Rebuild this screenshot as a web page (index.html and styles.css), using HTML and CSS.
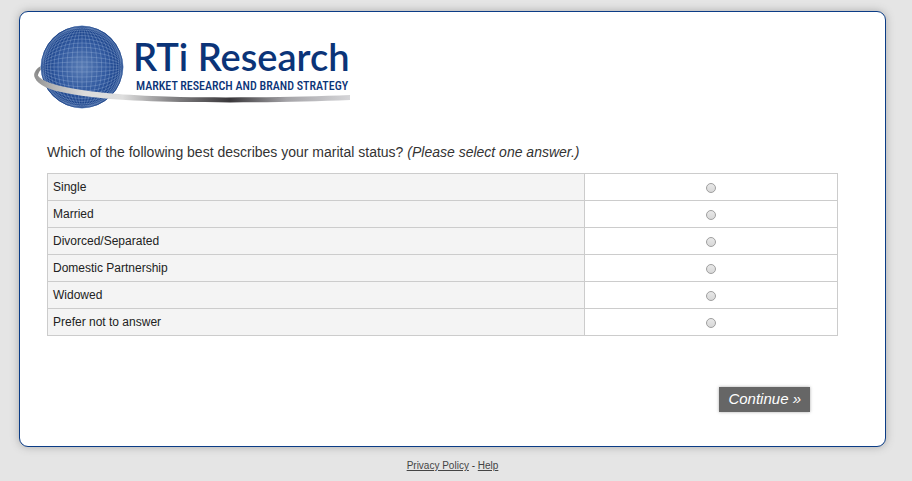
FILE: index.html
```
<!DOCTYPE html>
<html lang="en">
<head>
    <meta charset="utf-8" />
    <meta name="viewport" content="width=device-width, initial-scale=1.0">
    <title>RTi Research Survey</title>
    <link rel="stylesheet" href="styles.css">
</head>
<body>
    <div class="survey">
        <div class="logo">
            <svg viewBox="0 0 320 92" width="320" height="92" role="img" aria-label="RTi Research">
                <defs>
                    <radialGradient id="ball" cx="50%" cy="50%" r="50%">
                        <stop offset="0" stop-color="#5a7db5" />
                        <stop offset="0.6" stop-color="#31599f" />
                        <stop offset="1" stop-color="#123a82" />
                    </radialGradient>
                    <linearGradient id="band" gradientUnits="userSpaceOnUse" x1="4" y1="0" x2="320" y2="0">
                        <stop offset="0" stop-color="#8f8f8f" />
                        <stop offset="0.06" stop-color="#b4b4b4" />
                        <stop offset="0.16" stop-color="#dcdcdc" />
                        <stop offset="0.28" stop-color="#dedede" />
                        <stop offset="0.42" stop-color="#8d8c8e" />
                        <stop offset="0.62" stop-color="#39373a" />
                        <stop offset="0.8" stop-color="#a5a4a8" />
                        <stop offset="1" stop-color="#d5d5d8" />
                    </linearGradient>
                    <g id="meridians">
                        <path d="M52-41V41" transform="translate(0 47)" />
                        <ellipse cx="52" cy="47" rx="5" ry="41" />
                        <ellipse cx="52" cy="47" rx="10" ry="41" />
                        <ellipse cx="52" cy="47" rx="15" ry="41" />
                        <ellipse cx="52" cy="47" rx="19.7" ry="41" />
                        <ellipse cx="52" cy="47" rx="24" ry="41" />
                        <ellipse cx="52" cy="47" rx="28" ry="41" />
                        <ellipse cx="52" cy="47" rx="31.5" ry="41" />
                        <ellipse cx="52" cy="47" rx="34.5" ry="41" />
                        <ellipse cx="52" cy="47" rx="37" ry="41" />
                        <ellipse cx="52" cy="47" rx="39" ry="41" />
                    </g>
                </defs>
                <!-- back of the ring -->
                <path d="M13 45C6 48 3 53 5 58L8 60C7 55 9 51 12 49Z" fill="#8a8a8a" />
                <circle cx="52" cy="47" r="41" fill="url(#ball)" />
                <g fill="none" stroke="#a9bfe0" stroke-opacity="0.5" stroke-width="0.6">
                    <use href="#meridians" />
                    <use href="#meridians" transform="rotate(90 52 47)" />
                </g>
                <circle cx="52" cy="47" r="40.6" fill="none" stroke="#1b4389" stroke-width="0.8" />
                <!-- front of the ring -->
                <path d="M5 52C2 61 13 68 31 72C58 78 96 81 150 82C215 83 270 82 320 80V75C270 77 205 78 150 77C115 76 70 74 40 68C20 64 8 60 6 52Z" fill="url(#band)" />
                <text class="logo-name" x="103" y="51">RTi Research</text>
                <text class="logo-tagline" x="106" y="70">MARKET RESEARCH AND BRAND STRATEGY</text>
            </svg>
        </div>
        <form class="question">
            <p class="question-text" id="question">Which of the following best describes your marital status? <em>(Please select one answer.)</em></p>
            <table class="answers" aria-labelledby="question">
                <tr>
                    <th><label for="a1">Single</label></th>
                    <td><input type="radio" name="status" id="a1"></td>
                </tr>
                <tr>
                    <th><label for="a2">Married</label></th>
                    <td><input type="radio" name="status" id="a2"></td>
                </tr>
                <tr>
                    <th><label for="a3">Divorced/Separated</label></th>
                    <td><input type="radio" name="status" id="a3"></td>
                </tr>
                <tr>
                    <th><label for="a4">Domestic Partnership</label></th>
                    <td><input type="radio" name="status" id="a4"></td>
                </tr>
                <tr>
                    <th><label for="a5">Widowed</label></th>
                    <td><input type="radio" name="status" id="a5"></td>
                </tr>
                <tr>
                    <th><label for="a6">Prefer not to answer</label></th>
                    <td><input type="radio" name="status" id="a6"></td>
                </tr>
            </table>
            <div class="buttons">
                <button type="submit" class="continue-btn">Continue »</button>
            </div>
        </form>
    </div>
    <div class="footer">
        <a href="#">Privacy Policy</a> - <a href="#">Help</a>
    </div>
</body>
</html>
```
FILE: styles.css
```
body {
    font-family: "Liberation Sans", Arial, sans-serif;
    margin: 0;
    padding: 11px 26px 0 19px;
    background-color: #e5e5e5;
    color: #333;
}

.survey {
    background-color: white;
    border: 1px solid #0b3c86;
    border-radius: 9px;
    box-shadow: 0 0 8px #aaa;
    padding: 8px 47px 34px 27px;
}

.logo {
    margin-left: -17px;
}

    .logo svg {
        display: block;
    }

.logo-name {
    font-family: Lato, "Noto Sans", sans-serif;
    font-size: 38px;
    font-weight: 600;
    fill: #0b3478;
}

.logo-tagline {
    font-family: "Roboto Condensed", "Liberation Sans Narrow", Roboto, sans-serif;
    font-size: 12px;
    font-weight: 500;
    fill: #0b3478;
}

.question-text {
    font-size: 14px;
    line-height: 20px;
    margin: 30px 0 11px;
}

.answers {
    width: 100%;
    border-collapse: collapse;
    table-layout: fixed;
    font-size: 12px;
    color: #222;
}

    .answers th, .answers td {
        height: 26px;
        padding: 0;
        border: 1px solid #ccc;
    }

    .answers th {
        width: 68%;
        padding-left: 5px;
        box-sizing: border-box;
        background-color: #f4f4f4;
        font-weight: normal;
        text-align: left;
    }

    .answers td {
        text-align: center;
    }

    .answers input {
        appearance: none;
        display: block;
        width: 10px;
        height: 10px;
        margin: 2px auto 0;
        border: 1px solid #a0a0a0;
        border-radius: 50%;
        background: linear-gradient(#e8e8e8, #d8d8d8);
    }

        .answers input:checked {
            background: #555;
        }

.buttons {
    display: flex;
    justify-content: flex-end;
    margin-top: 51px;
    padding-right: 28px;
}

.continue-btn {
    font-family: inherit;
    font-size: 15px;
    font-style: italic;
    line-height: 17px;
    padding: 3px 9px 5px;
    border: 0;
    background-color: #666;
    color: white;
    box-shadow: 0 0 3px #aaa;
}

.footer {
    margin-top: 13px;
    font-size: 10px;
    line-height: 12px;
    text-align: center;
}

    .footer a {
        color: #444;
    }
```
